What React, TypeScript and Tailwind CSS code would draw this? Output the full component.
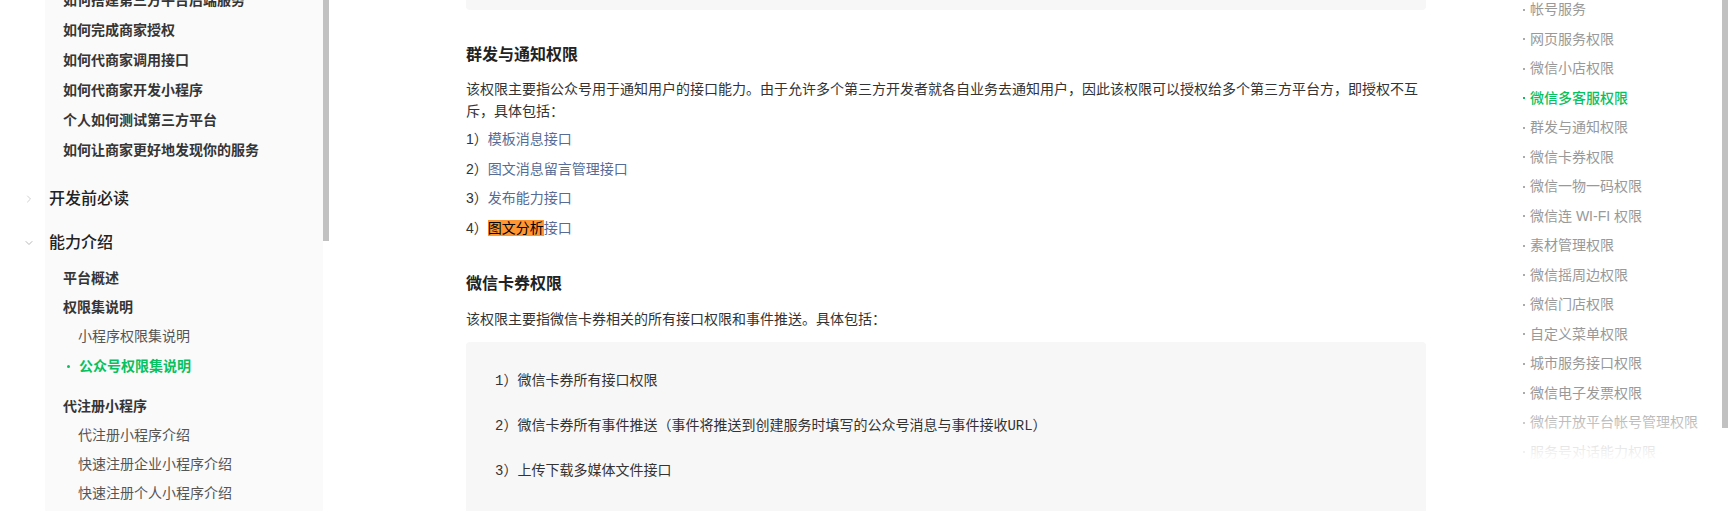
import { ChevronDown, ChevronRight } from 'lucide-react';

const topLinks = [
  '如何搭建第三方平台后端服务',
  '如何完成商家授权',
  '如何代商家调用接口',
  '如何代商家开发小程序',
  '个人如何测试第三方平台',
  '如何让商家更好地发现你的服务',
];

const tocItems = [
  '帐号服务',
  '网页服务权限',
  '微信小店权限',
  '微信多客服权限',
  '群发与通知权限',
  '微信卡券权限',
  '微信一物一码权限',
  '微信连 WI-FI 权限',
  '素材管理权限',
  '微信摇周边权限',
  '微信门店权限',
  '自定义菜单权限',
  '城市服务接口权限',
  '微信电子发票权限',
  '微信开放平台帐号管理权限',
  '服务号对话能力权限',
];

function SideNav() {
  return (
    <aside className="flex shrink-0">
      <div className="w-[45px] shrink-0" />
      <div className="w-[278px] shrink-0 bg-[#fafafa] text-[14px]">
        <div className="-mt-[15px] flex flex-col pl-[18px] font-semibold text-[#353535]">
          {topLinks.map((t) => (
            <div key={t} className="flex h-[30px] items-center whitespace-nowrap">
              {t}
            </div>
          ))}
        </div>

        <div className="mt-[12px] flex h-[44px] items-center text-[16px] font-medium text-[#222]">
          <span className="-ml-[22px] mr-[14px] flex w-[12px] justify-center text-[#c0c0c0]">
            <ChevronRight size={12} strokeWidth={1.5} />
          </span>
          开发前必读
        </div>
        <div className="flex h-[44px] items-center text-[16px] font-medium text-[#222]">
          <span className="-ml-[22px] mr-[14px] flex w-[12px] justify-center text-[#a0a0a0]">
            <ChevronDown size={12} strokeWidth={1.5} />
          </span>
          能力介绍
        </div>

        <div className="-mt-[1px] flex flex-col">
          <div className="flex h-[29px] items-center pl-[18px] font-semibold text-[#353535]">平台概述</div>
          <div className="flex h-[29px] items-center pl-[18px] font-semibold text-[#353535]">权限集说明</div>
          <div className="flex h-[29px] items-center pl-[33px] text-[#555]">小程序权限集说明</div>
          <div className="flex h-[30px] items-center pl-[22px] font-semibold text-[#07c160]">
            <span className="mr-[9px] h-[3px] w-[3px] rounded-full bg-[#07c160]" />
            公众号权限集说明
          </div>
          <div className="mt-[11px] flex h-[29px] items-center pl-[18px] font-semibold text-[#353535]">代注册小程序</div>
          <div className="flex h-[29px] items-center pl-[33px] text-[#555]">代注册小程序介绍</div>
          <div className="flex h-[29px] items-center pl-[33px] text-[#555]">快速注册企业小程序介绍</div>
          <div className="flex h-[29px] items-center pl-[33px] text-[#555]">快速注册个人小程序介绍</div>
        </div>
      </div>
      <div className="w-[6px] shrink-0">
        <div className="h-[241px] bg-[#c1c1c1]" />
      </div>
    </aside>
  );
}

function Link({ children }: { children: React.ReactNode }) {
  return <span className="text-[#576b95]">{children}</span>;
}

function Article() {
  return (
    <main className="w-[1097px] shrink-0 pl-[137px] text-[14px] text-[#333]">
      <div className="w-[960px]">
        <div className="-mt-[20px] h-[30px] rounded-[4px] bg-[#f7f7f7]" />

        <h2 className="mt-[33px] text-[16px] font-semibold leading-[24px] text-[#222]">群发与通知权限</h2>
        <p className="mt-[11px] leading-[22px]">
          <span className="block whitespace-nowrap">
            该权限主要指公众号用于通知用户的接口能力。由于允许多个第三方开发者就各自业务去通知用户，因此该权限可以授权给多个第三方平台方，即授权不互
          </span>
          <span className="block">斥，具体包括：</span>
        </p>
        <div className="mt-[6px] flex flex-col gap-[7.5px] leading-[22px]">
          <p>
            1）<Link>模板消息接口</Link>
          </p>
          <p>
            2）<Link>图文消息留言管理接口</Link>
          </p>
          <p>
            3）<Link>发布能力接口</Link>
          </p>
          <p>
            4）
            <span className="text-[#576b95]">
              <span className="bg-[#ff9632] text-black">图文分析</span>接口
            </span>
          </p>
        </div>

        <h2 className="mt-[33px] text-[16px] font-semibold leading-[24px] text-[#222]">微信卡券权限</h2>
        <p className="mt-[12px] leading-[22px]">该权限主要指微信卡券相关的所有接口权限和事件推送。具体包括：</p>

        <div className="mt-[12px] flex h-[200px] flex-col gap-[23px] rounded-[4px] bg-[#f7f7f7] pl-[29px] pt-[28px] font-['Liberation_Mono','Noto_Sans_CJK_SC',monospace] leading-[22px] text-[#333]">
          <p>1）微信卡券所有接口权限</p>
          <p>2）微信卡券所有事件推送（事件将推送到创建服务时填写的公众号消息与事件接收URL）</p>
          <p>3）上传下载多媒体文件接口</p>
        </div>
      </div>
    </main>
  );
}

function Toc() {
  return (
    <nav className="flex flex-1">
      <div className="relative flex-1 pl-[97px] text-[14px] text-[#999]">
        <div className="-mt-[5px] flex flex-col">
          {tocItems.map((t) => {
            const active = t === '微信多客服权限';
            return (
              <div
                key={t}
                className={
                  active
                    ? 'flex h-[29.5px] items-center whitespace-nowrap font-medium text-[#07c160]'
                    : 'flex h-[29.5px] items-center whitespace-nowrap'
                }
              >
                <span className={active ? 'mr-[5px] h-[2px] w-[2px] bg-[#07c160]' : 'mr-[5px] h-[2px] w-[2px] bg-[#aaa]'} />
                {t}
              </div>
            );
          })}
        </div>
        <div className="absolute inset-x-0 top-[398px] bottom-0 bg-[linear-gradient(to_bottom,rgba(255,255,255,0)_0px,#fff_64px)]" />
      </div>
      <div className="mr-[7px] w-[6px] shrink-0">
        <div className="h-[428px] bg-[#c1c1c1]" />
      </div>
    </nav>
  );
}

export default function App() {
  return (
    <div className="flex h-[511px] w-[1735px] overflow-hidden bg-white font-['Liberation_Sans','Noto_Sans_CJK_SC',sans-serif]">
      <SideNav />
      <Article />
      <Toc />
    </div>
  );
}
